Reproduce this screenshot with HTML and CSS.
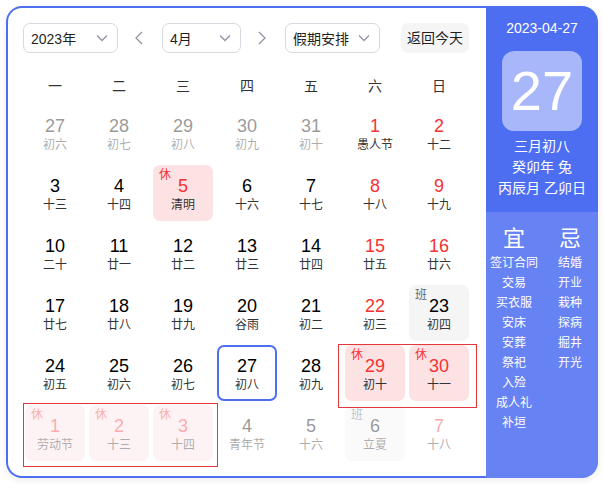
FILE: index.html
```html
<!DOCTYPE html>
<html lang="zh-CN">
<head>
<meta charset="utf-8">
<title>日历</title>
<link rel="stylesheet" href="styles.css">
</head>
<body>
<div class="calendar">
  <div class="main">
    <div class="toolbar">
      <div class="select sel-year"><span>2023年</span><svg class="chev" width="12" height="8" viewBox="0 0 12 8"><polyline points="1,1.5 6,6.5 11,1.5"/></svg></div>
      <div class="arrow"><svg width="10" height="14" viewBox="0 0 10 14"><polyline points="8,1 2,7 8,13"/></svg></div>
      <div class="select sel-month"><span>4月</span><svg class="chev" width="12" height="8" viewBox="0 0 12 8"><polyline points="1,1.5 6,6.5 11,1.5"/></svg></div>
      <div class="arrow"><svg width="10" height="14" viewBox="0 0 10 14"><polyline points="2,1 8,7 2,13"/></svg></div>
      <div class="select sel-holiday"><span>假期安排</span><svg class="chev" width="12" height="8" viewBox="0 0 12 8"><polyline points="1,1.5 6,6.5 11,1.5"/></svg></div>
      <div class="today-btn">返回今天</div>
    </div>
    <div class="weekdays">
      <span>一</span><span>二</span><span>三</span><span>四</span><span>五</span><span>六</span><span>日</span>
    </div>
    <div class="grid">
      <div class="cell other"><b class="num">27</b><i class="lunar">初六</i></div>
      <div class="cell other"><b class="num">28</b><i class="lunar">初七</i></div>
      <div class="cell other"><b class="num">29</b><i class="lunar">初八</i></div>
      <div class="cell other"><b class="num">30</b><i class="lunar">初九</i></div>
      <div class="cell other"><b class="num">31</b><i class="lunar">初十</i></div>
      <div class="cell red"><b class="num">1</b><i class="lunar">愚人节</i></div>
      <div class="cell red"><b class="num">2</b><i class="lunar">十二</i></div>

      <div class="cell"><b class="num">3</b><i class="lunar">十三</i></div>
      <div class="cell"><b class="num">4</b><i class="lunar">十四</i></div>
      <div class="cell red rest"><em class="tag">休</em><b class="num">5</b><i class="lunar">清明</i></div>
      <div class="cell"><b class="num">6</b><i class="lunar">十六</i></div>
      <div class="cell"><b class="num">7</b><i class="lunar">十七</i></div>
      <div class="cell red"><b class="num">8</b><i class="lunar">十八</i></div>
      <div class="cell red"><b class="num">9</b><i class="lunar">十九</i></div>

      <div class="cell"><b class="num">10</b><i class="lunar">二十</i></div>
      <div class="cell"><b class="num">11</b><i class="lunar">廿一</i></div>
      <div class="cell"><b class="num">12</b><i class="lunar">廿二</i></div>
      <div class="cell"><b class="num">13</b><i class="lunar">廿三</i></div>
      <div class="cell"><b class="num">14</b><i class="lunar">廿四</i></div>
      <div class="cell red"><b class="num">15</b><i class="lunar">廿五</i></div>
      <div class="cell red"><b class="num">16</b><i class="lunar">廿六</i></div>

      <div class="cell"><b class="num">17</b><i class="lunar">廿七</i></div>
      <div class="cell"><b class="num">18</b><i class="lunar">廿八</i></div>
      <div class="cell"><b class="num">19</b><i class="lunar">廿九</i></div>
      <div class="cell"><b class="num">20</b><i class="lunar">谷雨</i></div>
      <div class="cell"><b class="num">21</b><i class="lunar">初二</i></div>
      <div class="cell red"><b class="num">22</b><i class="lunar">初三</i></div>
      <div class="cell work"><em class="tag">班</em><b class="num">23</b><i class="lunar">初四</i></div>

      <div class="cell"><b class="num">24</b><i class="lunar">初五</i></div>
      <div class="cell"><b class="num">25</b><i class="lunar">初六</i></div>
      <div class="cell"><b class="num">26</b><i class="lunar">初七</i></div>
      <div class="cell today"><b class="num">27</b><i class="lunar">初八</i></div>
      <div class="cell"><b class="num">28</b><i class="lunar">初九</i></div>
      <div class="cell red rest"><em class="tag">休</em><b class="num">29</b><i class="lunar">初十</i></div>
      <div class="cell red rest"><em class="tag">休</em><b class="num">30</b><i class="lunar">十一</i></div>

      <div class="cell other red rest"><em class="tag">休</em><b class="num">1</b><i class="lunar">劳动节</i></div>
      <div class="cell other red rest"><em class="tag">休</em><b class="num">2</b><i class="lunar">十三</i></div>
      <div class="cell other red rest"><em class="tag">休</em><b class="num">3</b><i class="lunar">十四</i></div>
      <div class="cell other"><b class="num">4</b><i class="lunar">青年节</i></div>
      <div class="cell other"><b class="num">5</b><i class="lunar">十六</i></div>
      <div class="cell other work"><em class="tag">班</em><b class="num">6</b><i class="lunar">立夏</i></div>
      <div class="cell other red"><b class="num">7</b><i class="lunar">十八</i></div>

      <div class="mark mark-a"></div>
      <div class="mark mark-b"></div>
    </div>
  </div>
  <div class="panel">
    <div class="panel-top">
      <div class="p-date">2023-04-27</div>
      <div class="p-day">27</div>
      <div class="p-line p-first">三月初八</div>
      <div class="p-line">癸卯年 兔</div>
      <div class="p-line">丙辰月 乙卯日</div>
    </div>
    <div class="panel-bottom">
      <div class="col">
        <div class="col-head">宜</div>
        <div>签订合同</div><div>交易</div><div>买衣服</div><div>安床</div><div>安葬</div><div>祭祀</div><div>入殓</div><div>成人礼</div><div>补垣</div>
      </div>
      <div class="col">
        <div class="col-head">忌</div>
        <div>结婚</div><div>开业</div><div>栽种</div><div>探病</div><div>掘井</div><div>开光</div>
      </div>
    </div>
  </div>
</div>
</body>
</html>
```

FILE: styles.css
```css
* { box-sizing: border-box; }
html, body { background: #fff; }
body {
  margin: 0;
  padding: 6px;
  font-family: "Liberation Sans", "Noto Sans CJK SC", sans-serif;
  color: #333;
}
.calendar {
  display: flex;
  width: 592px;
  height: 472px;
  border-radius: 16px;
  box-shadow: 0 2px 8px rgba(0, 0, 0, 0.08);
}
.main {
  width: 480px;
  border: 2px solid #4e6ef2;
  border-right: none;
  border-radius: 16px 0 0 16px;
  padding: 15px 0 0 15px;
}
.toolbar {
  display: flex;
  align-items: center;
  height: 30px;
}
.select {
  display: flex;
  align-items: center;
  justify-content: space-between;
  height: 30px;
  border: 1px solid #d7d9e0;
  border-radius: 7px;
  padding: 0 9px 0 7px;
  font-size: 14px;
  color: #1f1f1f;
}
.chev polyline, .arrow polyline {
  fill: none;
  stroke: #9195a3;
  stroke-width: 1.3;
}
.sel-year { width: 95px; }
.sel-month { width: 79px; }
.sel-holiday { width: 95px; }
.arrow {
  width: 44px;
  display: flex;
  justify-content: center;
  padding-right: 2px;
}
.arrow svg { display: block; }
.today-btn {
  margin-left: 21px;
  width: 68px;
  height: 30px;
  line-height: 30px;
  text-align: center;
  background: #f5f5f6;
  border-radius: 7px;
  font-size: 14px;
  color: #1f1f1f;
}
.weekdays {
  margin-top: 14px;
  display: grid;
  grid-template-columns: repeat(7, 64px);
  height: 36px;
  align-items: center;
  text-align: center;
  font-size: 14px;
  color: #333;
}
.grid {
  position: relative;
  display: grid;
  grid-template-columns: repeat(7, 64px);
  grid-auto-rows: 60px;
}
.cell {
  position: relative;
  margin: 2px;
  border-radius: 7px;
  display: flex;
  flex-direction: column;
  align-items: center;
  justify-content: center;
  padding-top: 1px;
}
.num {
  font-weight: normal;
  font-size: 18px;
  line-height: 22px;
  color: #000;
}
.lunar {
  font-style: normal;
  font-size: 12px;
  line-height: 16px;
  color: #333;
}
.red .num { color: #f73131; }
.rest { background: #fde2e4; }
.work { background: #f5f5f6; }
.tag {
  position: absolute;
  top: 2px;
  left: 6px;
  font-style: normal;
  font-size: 12px;
  line-height: 16px;
  color: #f73131;
}
.work .tag { color: #626675; }
.today { border: 2px solid #4e6ef2; }
.other { opacity: 0.4; }
.mark {
  position: absolute;
  border: 1px solid #e8353b;
  pointer-events: none;
}
.mark-a { left: 315px; top: 241px; width: 139px; height: 64px; }
.mark-b { left: 0; top: 300px; width: 195px; height: 64px; }
.panel {
  width: 112px;
  display: flex;
  flex-direction: column;
  background: #4e6ef2;
  border-radius: 0 16px 16px 0;
  overflow: hidden;
  color: #fff;
}
.panel-top {
  height: 206px;
  display: flex;
  flex-direction: column;
  align-items: center;
  padding-top: 12px;
}
.p-date { font-size: 14px; line-height: 20px; }
.p-day {
  margin-top: 13px;
  width: 80px;
  height: 80px;
  border-radius: 12px;
  background: rgba(255, 255, 255, 0.5);
  font-size: 56px;
  line-height: 80px;
  text-align: center;
}
.p-line { font-size: 14px; line-height: 21px; }
.p-first { margin-top: 5px; }
.panel-bottom {
  flex: 1;
  display: flex;
  background: rgba(255, 255, 255, 0.14);
  padding-top: 14px;
}
.col {
  width: 56px;
  text-align: center;
  font-size: 12px;
  line-height: 20px;
}
.col-head {
  font-size: 22px;
  line-height: 26px;
  margin-bottom: 1px;
}
```
